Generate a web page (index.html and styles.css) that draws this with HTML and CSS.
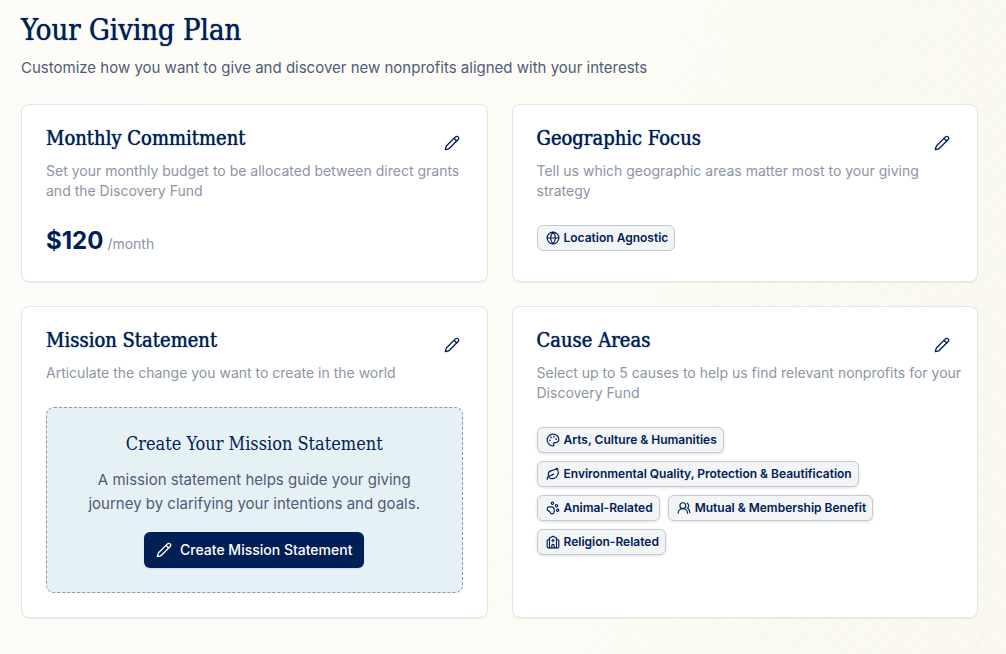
FILE: index.html
```
<!DOCTYPE html>
<html lang="en">
<head>
<meta charset="utf-8">
<meta name="viewport" content="width=device-width, initial-scale=1">
<title>Your Giving Plan</title>
<link rel="stylesheet" href="styles.css">
</head>
<body>
<svg class="sprite" aria-hidden="true">
  <symbol id="pencil" viewBox="0 0 24 24"><path d="M21.174 6.812a1 1 0 0 0-3.986-3.987L3.842 16.174a2 2 0 0 0-.5.83l-1.321 4.352a.5.5 0 0 0 .623.622l4.353-1.32a2 2 0 0 0 .83-.497z"/><path d="m15 5 4 4"/></symbol>
  <symbol id="globe" viewBox="0 0 24 24"><circle cx="12" cy="12" r="10"/><path d="M12 2a14.5 14.5 0 0 0 0 20 14.5 14.5 0 0 0 0-20"/><path d="M2 12h20"/></symbol>
  <symbol id="palette" viewBox="0 0 24 24"><circle cx="13.5" cy="6.5" r=".5"/><circle cx="17.5" cy="10.5" r=".5"/><circle cx="8.5" cy="7.5" r=".5"/><circle cx="6.5" cy="12.5" r=".5"/><path d="M12 2C6.5 2 2 6.5 2 12s4.5 10 10 10c.926 0 1.648-.746 1.648-1.688 0-.437-.18-.835-.437-1.125-.29-.289-.438-.652-.438-1.125a1.64 1.64 0 0 1 1.668-1.668h1.996c3.051 0 5.555-2.503 5.555-5.554C21.965 6.012 17.461 2 12 2z"/></symbol>
  <symbol id="leaf" viewBox="0 0 24 24"><path d="M11 20A7 7 0 0 1 9.8 6.1C15.5 5 17 4.48 19 2c1 2 2 4.18 2 8 0 5.5-4.78 10-10 10Z"/><path d="M2 21c0-3 1.85-5.36 5.08-6C9.5 14.52 12 13 13 12"/></symbol>
  <symbol id="paw" viewBox="0 0 24 24"><circle cx="11" cy="4" r="2"/><circle cx="18" cy="8" r="2"/><circle cx="20" cy="16" r="2"/><path d="M9 10a5 5 0 0 1 5 5v3.5a3.5 3.5 0 0 1-6.84 1.045Q6.52 17.48 4.46 16.84A3.5 3.5 0 0 1 5.5 10Z"/></symbol>
  <symbol id="users" viewBox="0 0 24 24"><path d="M18 21a8 8 0 0 0-16 0"/><circle cx="10" cy="8" r="5"/><path d="M22 20c0-3.37-2-6.5-4-8a5 5 0 0 0-.45-8.3"/></symbol>
  <symbol id="church" viewBox="0 0 24 24"><path d="m18 7 4 2v11a2 2 0 0 1-2 2H4a2 2 0 0 1-2-2V9l4-2"/><path d="M14 22v-4a2 2 0 0 0-4 0v4"/><path d="M18 22V5l-6-3-6 3v17"/><path d="M12 7v5"/><path d="M10 9h4"/></symbol>
</svg>
<main class="page">
  <header class="page-header">
    <h1 class="page-title">Your Giving Plan</h1>
    <p class="page-subtitle">Customize how you want to give and discover new nonprofits aligned with your interests</p>
  </header>
  <div class="cards">
    <section class="card">
      <div class="card-head">
        <h2 class="card-title">Monthly Commitment</h2>
        <button class="edit" type="button" aria-label="Edit monthly commitment"><svg class="icon"><use href="#pencil"/></svg></button>
      </div>
      <p class="card-text">Set your monthly budget to be allocated between direct grants and the Discovery Fund</p>
      <p class="amount"><strong class="amount-value">$120</strong><span class="amount-unit">/month</span></p>
    </section>
    <section class="card">
      <div class="card-head">
        <h2 class="card-title">Geographic Focus</h2>
        <button class="edit" type="button" aria-label="Edit geographic focus"><svg class="icon"><use href="#pencil"/></svg></button>
      </div>
      <p class="card-text">Tell us which geographic areas matter most to your giving strategy</p>
      <ul class="tags">
        <li class="tag"><svg class="tag-icon"><use href="#globe"/></svg>Location Agnostic</li>
      </ul>
    </section>
    <section class="card">
      <div class="card-head">
        <h2 class="card-title">Mission Statement</h2>
        <button class="edit" type="button" aria-label="Edit mission statement"><svg class="icon"><use href="#pencil"/></svg></button>
      </div>
      <p class="card-text">Articulate the change you want to create in the world</p>
      <div class="callout">
        <h3 class="callout-title">Create Your Mission Statement</h3>
        <p class="callout-text">A mission statement helps guide your giving journey by clarifying your intentions and goals.</p>
        <button class="primary" type="button"><svg class="icon"><use href="#pencil"/></svg>Create Mission Statement</button>
      </div>
    </section>
    <section class="card">
      <div class="card-head">
        <h2 class="card-title">Cause Areas</h2>
        <button class="edit" type="button" aria-label="Edit cause areas"><svg class="icon"><use href="#pencil"/></svg></button>
      </div>
      <p class="card-text">Select up to 5 causes to help us find relevant nonprofits for your Discovery Fund</p>
      <ul class="tags">
        <li class="tag raised"><svg class="tag-icon"><use href="#palette"/></svg>Arts, Culture &amp; Humanities</li>
        <li class="tag raised"><svg class="tag-icon"><use href="#leaf"/></svg>Environmental Quality, Protection &amp; Beautification</li>
        <li class="tag raised"><svg class="tag-icon"><use href="#paw"/></svg>Animal-Related</li>
        <li class="tag raised"><svg class="tag-icon"><use href="#users"/></svg>Mutual &amp; Membership Benefit</li>
        <li class="tag raised"><svg class="tag-icon"><use href="#church"/></svg>Religion-Related</li>
      </ul>
    </section>
  </div>
</main>
</body>
</html>
```
FILE: styles.css
```
:root {
  --navy: #002055;
  --slate: #505c75;
  --muted: #8c95a5;
  --display: "DejaVu Serif Condensed", "DejaVu Serif", serif;
}
* { box-sizing: border-box; }
h1, h2, h3, p, ul { margin: 0; padding: 0; }
body {
  margin: 0;
  min-height: 100vh;
  color: var(--navy);
  font-family: Inter, sans-serif;
  background:
    linear-gradient(100deg, #fdfcf8 0%, #fcfbf5e6 60%, #f9f8ee66 100%),
    repeating-conic-gradient(#f7f7e9 0 25%, #fbf9f2 0 50%) 0 0 / 20px 20px;
}
.sprite { display: none; }
.page { padding: 10px 28px 36px 21px; }
.page-header { margin-bottom: 24px; }
.page-title {
  margin-bottom: 6px;
  font: 400 29px/40px var(--display);
  text-shadow: 0 0 1px var(--navy);
}
.page-subtitle { font-size: 15px; line-height: 24px; color: var(--slate); }
.cards {
  display: grid;
  grid-template-columns: repeat(2, minmax(0, 1fr));
  gap: 24px;
}
.card {
  padding: 20px 24px 24px;
  background: #fff;
  border: 1px solid #e3e6eb;
  border-radius: 8px;
  box-shadow: 0 1px 2px #0000000d;
}
.card-head {
  display: flex;
  justify-content: space-between;
  align-items: flex-start;
  height: 36px;
}
.card-title {
  font: 400 20px/26px var(--display);
  text-shadow: 0 0 1px var(--navy);
}
.edit {
  display: flex;
  align-items: center;
  justify-content: center;
  width: 22px;
  height: 36px;
  padding: 0;
  border: 0;
  background: none;
  color: inherit;
  cursor: pointer;
}
.icon, .tag-icon {
  flex: none;
  fill: none;
  stroke: currentColor;
  stroke-width: 2;
  stroke-linecap: round;
  stroke-linejoin: round;
}
.icon { width: 16px; height: 16px; }
.tag-icon { width: 14px; height: 14px; }
.card-text {
  margin: 0 -12px 24px 0;
  font-size: 14px;
  line-height: 20px;
  color: var(--muted);
}
.amount {
  display: flex;
  align-items: baseline;
  gap: 4px;
  line-height: 32px;
}
.amount-value { font-size: 24px; font-weight: 700; }
.amount-unit { font-size: 14px; line-height: 20px; color: var(--muted); }
.tags {
  display: flex;
  flex-wrap: wrap;
  gap: 8px;
  list-style: none;
}
.tag {
  display: flex;
  align-items: center;
  gap: 4px;
  padding: 3px 6px 3px 8px;
  border: 1px solid #c3c9d6;
  border-radius: 6px;
  background: #f3f4f6;
  font-size: 12px;
  line-height: 18px;
  font-weight: 600;
  white-space: nowrap;
}
.raised { box-shadow: 0 1px 3px #0000001f; }
.callout {
  display: flex;
  flex-direction: column;
  align-items: center;
  padding: 24px;
  border: 1px dashed #8a9bb0;
  border-radius: 8px;
  background: #e6f1f6;
  text-align: center;
}
.callout-title { margin-bottom: 12px; font: 400 18px/24px var(--display); }
.callout-text {
  margin-bottom: 16px;
  font-size: 15px;
  line-height: 24px;
  color: var(--slate);
}
.primary {
  display: flex;
  align-items: center;
  gap: 8px;
  height: 36px;
  padding: 0 12px;
  border: 0;
  border-radius: 6px;
  background: #001f54;
  color: #fff;
  font: 500 14px/20px Inter, sans-serif;
  box-shadow: 0 1px 2px #0000001a;
  cursor: pointer;
}
```
